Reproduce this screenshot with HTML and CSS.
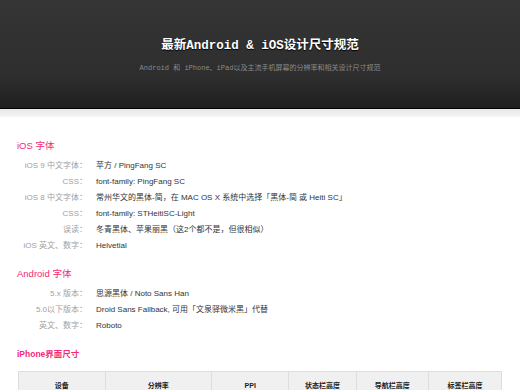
FILE: index.html
```html
<!DOCTYPE html>
<html lang="zh-CN">
<head>
  <meta charset="UTF-8">
  <meta name="viewport" content="width=device-width, initial-scale=1.0">
  <title>最新Android & iOS设计尺寸规范</title>
  <link rel="stylesheet" href="styles.css">
</head>
<body>

  <!-- Header -->
  <div class="header">
    <h1>最新Android &amp; iOS设计尺寸规范</h1>
    <p class="sub">Android 和 iPhone、iPad以及主流手机屏幕的分辨率和相关设计尺寸规范</p>
  </div>
  <div class="band"></div>

  <div class="content">
    <h2>iOS 字体</h2>
    <dl class="spec">
      <dt>iOS 9 中文字体：</dt><dd>苹方 / PingFang SC</dd>
      <dt>CSS：</dt><dd>font-family: PingFang SC</dd>
      <dt>iOS 8 中文字体：</dt><dd>常州华文的黑体-简，在 MAC OS X 系统中选择「黑体-简 或 Heiti SC」</dd>
      <dt>CSS：</dt><dd>font-family: STHeitiSC-Light</dd>
      <dt>误读：</dt><dd>冬青黑体、苹果丽黑（这2个都不是，但很相似）</dd>
      <dt>iOS 英文、数字：</dt><dd>Helvetial</dd>
    </dl>

    <h2>Android 字体</h2>
    <dl class="spec">
      <dt>5.x 版本：</dt><dd>思源黑体 / Noto Sans Han</dd>
      <dt>5.0以下版本：</dt><dd>Droid Sans Fallback, 可用「文泉驿微米黑」代替</dd>
      <dt>英文、数字：</dt><dd>Roboto</dd>
    </dl>

    <h2 class="bold">iPhone界面尺寸</h2>
    <table class="sizes">
      <tr>
        <th class="c1">设备</th>
        <th class="c2">分辨率</th>
        <th class="c3">PPI</th>
        <th class="c4">状态栏高度</th>
        <th class="c5">导航栏高度</th>
        <th class="c6">标签栏高度</th>
      </tr>
    </table>
  </div>

</body>
</html>
```

FILE: styles.css
```css
body {
  margin: 0;
  padding: 0;
  background: #fff;
  font-family: 'Liberation Sans', 'Noto Sans CJK SC', sans-serif;
  color: #333;
}

.header {
  height: 109px;
  background: linear-gradient(#353535, #2e2e2e 70%, #1f1f1f);
  border-bottom: 1px solid #000;
  text-align: center;
  box-sizing: border-box;
  padding-top: 37px;
}
.header h1 {
  margin: 0;
  font-family: 'Liberation Mono', 'Noto Sans CJK SC', monospace;
  font-size: 12.5px;
  line-height: 19px;
  font-weight: bold;
  color: #fff;
  text-shadow: 0 1px 1px #000;
}
.header .sub {
  margin: 7px 0 0;
  font-family: 'Liberation Mono', 'Noto Sans CJK SC', monospace;
  font-size: 7px;
  line-height: 10px;
  color: #8a8a8a;
}
.band {
  height: 8px;
  background: linear-gradient(#e8e8e8, #f4f4f4);
}

.content {
  padding: 22px 18px 0 17px;
}
h2 {
  margin: 0;
  font-size: 9.5px;
  line-height: 14px;
  font-weight: normal;
  color: #f52a78;
}
h2.bold {
  font-weight: bold;
  font-size: 8.5px;
}

.spec {
  display: grid;
  grid-template-columns: 70px 1fr;
  column-gap: 9px;
  margin: 5px 0 13px;
  font-size: 8px;
  line-height: 16px;
}
.spec dt {
  text-align: right;
  color: #a0a0a0;
}
.spec dd {
  margin: 0;
  color: #333;
  white-space: nowrap;
}

.sizes {
  width: 484px;
  margin: 10px 0 0 1px;
  border-collapse: collapse;
  font-size: 7px;
}
.sizes th {
  border: 1px solid #ddd;
  height: 24px;
  text-align: center;
  background: #f0f0f0;
  color: #222;
  font-weight: bold;
}
.c1 { width: 87px; }
.c2 { width: 108px; }
.c3 { width: 77px; }
.c4 { width: 67px; }
.c5 { width: 72px; }
.c6 { width: 73px; }
```
